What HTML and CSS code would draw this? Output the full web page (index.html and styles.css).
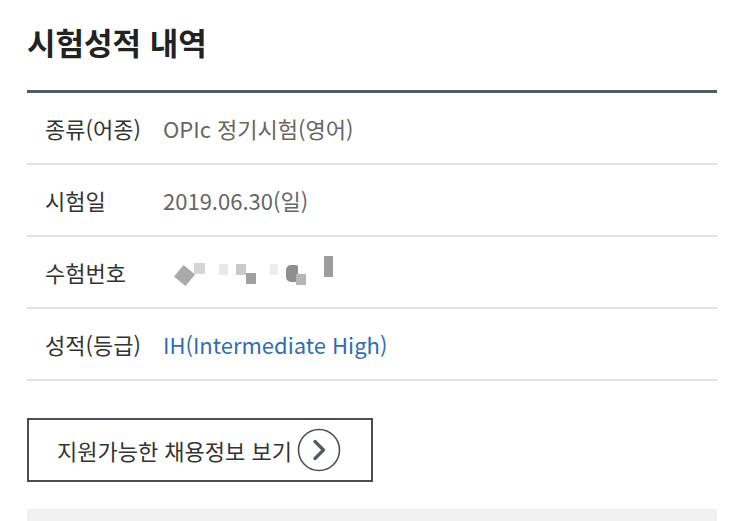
FILE: index.html
```html
<!DOCTYPE html>
<html lang="ko">
<head>
  <meta charset="UTF-8">
  <title>시험성적 내역</title>
  <link rel="stylesheet" href="styles.css">
</head>
<body>

<div class="result">
  <h1>시험성적 내역</h1>

  <div class="rows">
    <div class="row">
      <span class="label">종류(어종)</span>
      <span class="value">OPIc 정기시험(영어)</span>
    </div>
    <div class="row">
      <span class="label">시험일</span>
      <span class="value">2019.06.30(일)</span>
    </div>
    <div class="row">
      <span class="label">수험번호</span>
      <span class="value masked">
        <i class="px p1"></i><i class="px p2"></i><i class="px p3"></i><i class="px p4"></i><i class="px p5"></i><i class="px p6"></i><i class="px p7"></i><i class="px p8"></i><i class="px p9"></i>
      </span>
    </div>
    <div class="row">
      <span class="label">성적(등급)</span>
      <span class="value grade">IH(Intermediate High)</span>
    </div>
  </div>

  <a class="more" href="#">
    지원가능한 채용정보 보기
    <svg width="44" height="44" viewBox="0 0 44 44">
      <circle cx="22" cy="22" r="20.5" fill="none" stroke="#4a4f55" stroke-width="1.6"/>
      <path d="M18 13.5 L26.5 22 L18 30.5" fill="none" stroke="#4f5a64" stroke-width="3.2" stroke-linecap="round" stroke-linejoin="round"/>
    </svg>
  </a>

  <div class="footer-bar"></div>
</div>

</body>
</html>
```

FILE: styles.css
```css
body {
  margin: 0;
  background: #fff;
  font-family: "Noto Sans CJK KR", "Noto Sans", sans-serif;
  color: #333;
}
.result {
  padding: 0 26px 0 27px;
}
h1 {
  margin: 0;
  padding-top: 21px;
  font-size: 31px;
  line-height: 42px;
  font-weight: 700;
  color: #222;
  height: 69px;
}
.rows {
  border-top: 3px solid #505b65;
}
.row {
  display: flex;
  align-items: center;
  height: 70px;
  border-bottom: 2px solid #e2e2e2;
  font-size: 22px;
}
.label {
  width: 118px;
  padding-left: 18px;
  color: #333;
}
.value { color: #666; }
.grade { color: #2f6db3; }
.masked {
  display: flex;
  align-items: center;
  height: 40px;
}
.px { display: inline-block; }
.p1 { width: 15px; height: 15px; background: #a9a9a9; transform: rotate(40deg); margin: 6px 0 0 14px; }
.p2 { width: 11px; height: 11px; background: #d6d6d6; margin: -8px 0 0 2px; }
.p3 { width: 9px; height: 11px; background: #e8e8e8; margin: -6px 0 0 14px; }
.p4 { width: 10px; height: 11px; background: #c9c9c9; margin: -6px 0 0 8px; }
.p5 { width: 10px; height: 11px; background: #a0a0a0; margin: 12px 0 0 0; }
.p6 { width: 8px; height: 11px; background: #ededed; margin: -6px 0 0 14px; }
.p7 { width: 12px; height: 17px; background: #8f8f8f; border-radius: 5px 2px 2px 5px; margin: 2px 0 0 8px; }
.p8 { width: 10px; height: 11px; background: #b5b5b5; margin: 14px 0 0 -2px; }
.p9 { width: 9px; height: 21px; background: #9d9d9d; margin: -12px 0 0 18px; }
.more {
  display: flex;
  align-items: center;
  gap: 5px;
  box-sizing: border-box;
  width: 346px;
  height: 64px;
  margin-top: 37px;
  padding-left: 28px;
  border: 2px solid #4a4f55;
  color: #333;
  text-decoration: none;
  font-size: 22px;
}
.more svg { flex: none; }
.footer-bar {
  margin-top: 27px;
  height: 14px;
  background: #f0f0f0;
}
```
